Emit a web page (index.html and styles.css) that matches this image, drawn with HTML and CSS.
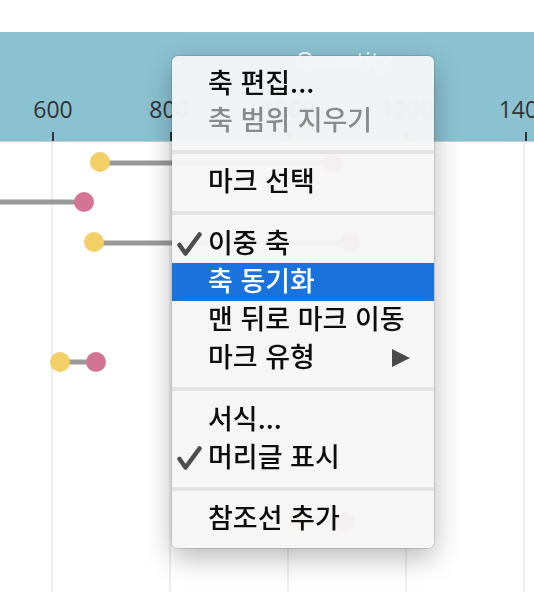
FILE: index.html
```html
<!DOCTYPE html>
<html lang="ko">
<head>
<meta charset="utf-8">
<title>Axis context menu</title>
<link rel="stylesheet" href="styles.css">
</head>
<body>
<div class="viz">
  <div class="top-space"></div>
  <div class="axis-band">
    <div class="axis-title">Quantity</div>
    <span class="tick-label" style="left:53px">600</span>
    <span class="tick-label" style="left:169px">800</span>
    <span class="tick-label" style="left:289px">1000</span>
    <span class="tick-label" style="left:407px">1200</span>
    <span class="tick-label" style="left:525px">1400</span>
    <span class="tick" style="left:52px"></span>
    <span class="tick" style="left:170px"></span>
    <span class="tick" style="left:288px"></span>
    <span class="tick" style="left:406px"></span>
    <span class="tick" style="left:525px"></span>
  </div>
  <svg class="plot" width="534" height="450" viewBox="0 0 534 450">
    <g class="grid">
      <line x1="52" y1="0" x2="52" y2="450"/>
      <line x1="170" y1="0" x2="170" y2="450"/>
      <line x1="288" y1="0" x2="288" y2="450"/>
      <line x1="406" y1="0" x2="406" y2="450"/>
      <line x1="524" y1="0" x2="524" y2="450"/>
    </g>
    <g class="bars">
      <line x1="100" y1="21" x2="333" y2="21"/>
      <line x1="0" y1="60" x2="84" y2="60"/>
      <line x1="94" y1="101" x2="350" y2="101"/>
      <line x1="60" y1="220" x2="96" y2="220"/>
      <line x1="300" y1="380" x2="345" y2="380"/>
    </g>
    <circle class="dot-y" cx="100" cy="20" r="10"/>
    <circle class="dot-p" cx="333" cy="20" r="10"/>
    <circle class="dot-p" cx="84" cy="60" r="10"/>
    <circle class="dot-y" cx="94" cy="100" r="10"/>
    <circle class="dot-p" cx="350" cy="100" r="10"/>
    <circle class="dot-y" cx="60" cy="220" r="10"/>
    <circle class="dot-p" cx="96" cy="220" r="10"/>
    <circle class="dot-y" cx="300" cy="380" r="10"/>
    <circle class="dot-p" cx="345" cy="380" r="10"/>
  </svg>
</div>

<div class="menu">
  <div class="group">
    <div class="item">축 편집...</div>
    <div class="item disabled">축 범위 지우기</div>
  </div>
  <div class="sep"></div>
  <div class="group">
    <div class="item">마크 선택</div>
  </div>
  <div class="sep"></div>
  <div class="group tall">
    <div class="item"><svg class="check" width="26" height="26" viewBox="0 0 26 26"><path d="M3.5 14 L9.5 22.5 L23.5 3.5"/></svg>이중 축</div>
    <div class="item active">축 동기화</div>
    <div class="item">맨 뒤로 마크 이동</div>
    <div class="item">마크 유형<span class="arrow"></span></div>
  </div>
  <div class="sep"></div>
  <div class="group tall">
    <div class="item">서식...</div>
    <div class="item"><svg class="check" width="26" height="26" viewBox="0 0 26 26"><path d="M3.5 14 L9.5 22.5 L23.5 3.5"/></svg>머리글 표시</div>
  </div>
  <div class="sep"></div>
  <div class="group">
    <div class="item">참조선 추가</div>
  </div>
</div>
</body>
</html>
```

FILE: styles.css
```css
html, body {
  margin: 0;
  padding: 0;
  background: #ffffff;
}

body {
  width: 534px;
  height: 592px;
  overflow: hidden;
  position: relative;
  font-family: "Noto Sans CJK KR", "Noto Sans", sans-serif;
}

.viz {
  display: flex;
  flex-direction: column;
  width: 534px;
}

.top-space {
  height: 32px;
  background: #ffffff;
}

.axis-band {
  position: relative;
  height: 109px;
  background: #8bc2d1;
  border-bottom: 1px solid #c9cfd1;
  font-family: "Open Sans", "Liberation Sans", sans-serif;
}

.axis-title {
  position: absolute;
  left: 296px;
  top: 14px;
  font-size: 23px;
  line-height: 28px;
  color: #f6f9fa;
  letter-spacing: 0.4px;
}

.tick-label {
  position: absolute;
  top: 62px;
  transform: translateX(-50%);
  font-size: 23px;
  line-height: 30px;
  color: #333333;
}

.tick {
  position: absolute;
  bottom: 0;
  width: 2px;
  height: 9px;
  background: #333333;
}

.plot {
  display: block;
}

.grid line {
  stroke: #eeeeee;
  stroke-width: 2;
}

.bars line {
  stroke: #999999;
  stroke-width: 5;
  stroke-linecap: round;
}

.dot-y {
  fill: #f2cf67;
}

.dot-p {
  fill: #d47494;
}

/* context menu overlay */
.menu {
  position: absolute;
  left: 172px;
  top: 56px;
  width: 262px;
  height: 492px;
  box-sizing: border-box;
  background: rgba(245, 245, 245, 0.95);
  -webkit-backdrop-filter: blur(1.5px);
  backdrop-filter: blur(1.5px);
  border-radius: 6px;
  box-shadow: 0 0 0 1px rgba(0, 0, 0, 0.12), 0 10px 28px rgba(0, 0, 0, 0.28);
  display: flex;
  flex-direction: column;
  overflow: hidden;
}

.group {
  display: flex;
  flex-direction: column;
  padding: 10px 0;
}

.item {
  position: relative;
  display: flex;
  align-items: center;
  box-sizing: border-box;
  height: 37px;
  padding: 0 24px 5px 36px;
  font-size: 27px;
  font-weight: 500;
  line-height: 32px;
  color: #0d0d0d;
  white-space: nowrap;
}

.group.tall .item {
  height: 38px;
}

.item.disabled {
  color: #8a8a8a;
}

.item.active {
  background: #1a73dc;
  color: #ffffff;
}

.check {
  position: absolute;
  left: 4px;
  top: 6px;
}

.check path {
  fill: none;
  stroke: #4d4d4d;
  stroke-width: 4.5;
  stroke-linecap: round;
  stroke-linejoin: round;
}

.arrow {
  margin-left: auto;
  margin-top: 5px;
  width: 0;
  height: 0;
  border-left: 18px solid #4a4a4a;
  border-top: 9.5px solid transparent;
  border-bottom: 9.5px solid transparent;
}

.sep {
  height: 4px;
  background: #e3e3e3;
  flex: none;
}
```
